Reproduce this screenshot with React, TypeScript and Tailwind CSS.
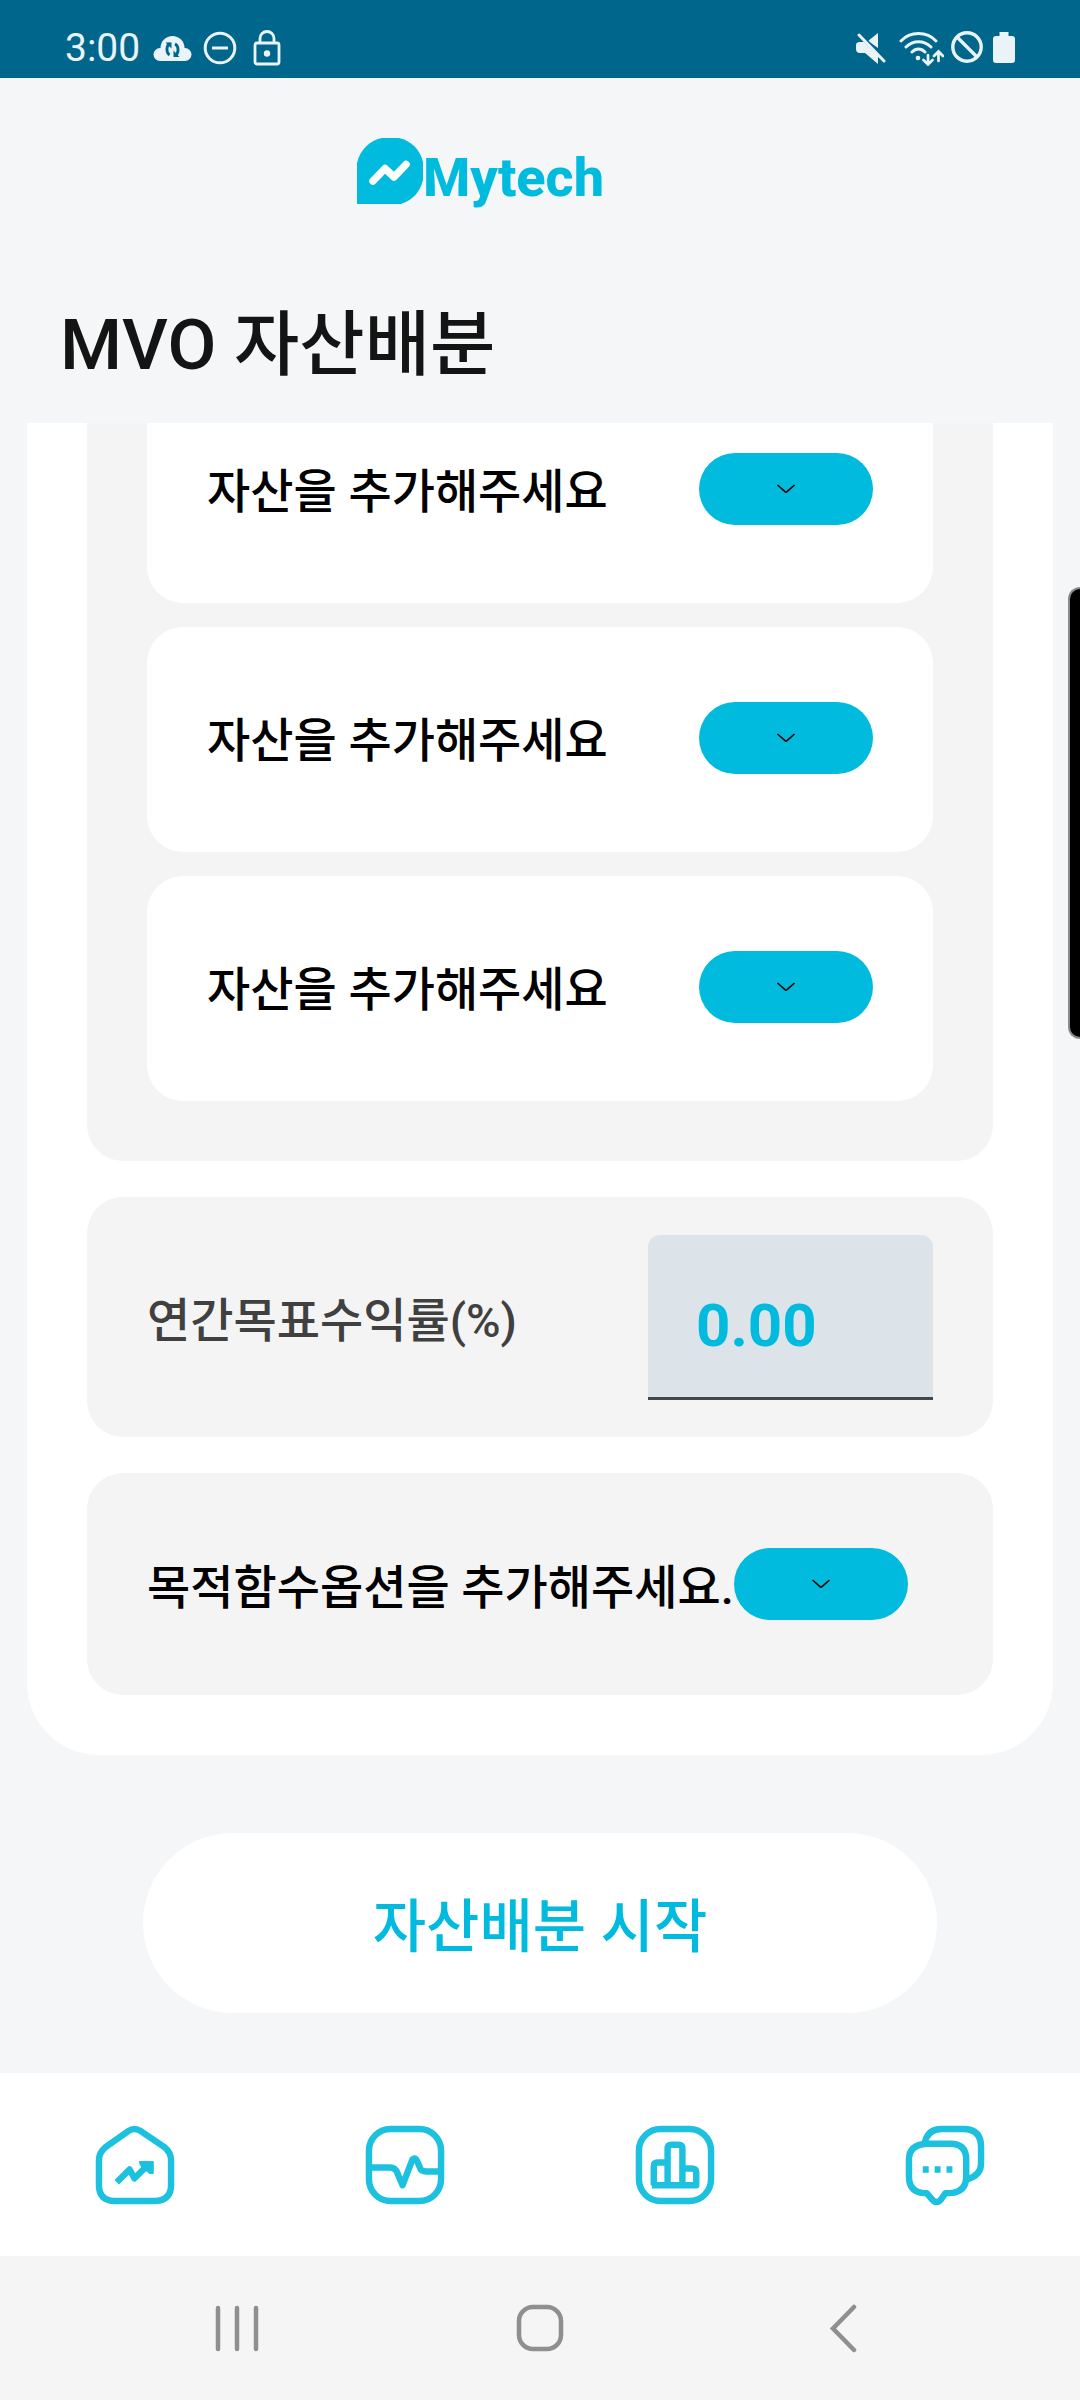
import { useState } from "react";

const FONT = "font-[Roboto,'Noto_Sans_CJK_KR',sans-serif]";

function StatusBar() {
  return (
    <div className="flex h-[78px] shrink-0 items-center justify-between bg-[#00668b] pl-[65px] pr-[65px] pt-[17px] text-[#eaf3f8]">
      <div className="flex items-center">
        <time className="w-[74px] text-[39px] leading-[48px]">3:00</time>
        <svg className="ml-[14px]" width="39" height="40" viewBox="0 0 39 40" aria-hidden="true">
          <circle cx="19.500" cy="20" r="12" fill="currentColor" />
          <rect x="0.500" y="20" width="38" height="13" rx="6.500" fill="currentColor" />
          <path d="M17 15.500c-4 2-4 9-.5 11.500M22 16c4 2 4 9 .5 11.500" fill="none" stroke="#00668b" strokeWidth="2.800" />
          <path d="M12.500 14.500h6v6zM20.500 22.500v6.500h6z" fill="#00668b" />
        </svg>
        <svg className="ml-[11px]" width="34" height="34" viewBox="0 0 34 34" fill="none" stroke="currentColor" strokeWidth="3" aria-hidden="true">
          <circle cx="17" cy="17" r="14.800" />
          <path d="M9 17h16" />
        </svg>
        <svg className="ml-[16px]" width="28" height="36" viewBox="0 0 28 36" fill="none" stroke="currentColor" strokeWidth="2.800" aria-hidden="true">
          <rect x="2" y="13" width="24" height="21" rx="2" />
          <path d="M7 13V8.500a7 7 0 0 1 14 0V13" />
          <circle cx="14" cy="23.500" r="3.200" fill="currentColor" stroke="none" />
        </svg>
      </div>
      <div className="flex items-center">
        <svg width="30" height="34" viewBox="0 0 30 34" aria-hidden="true">
          <path d="M12 10l10-8v15z" fill="currentColor" />
          <path d="M3 4l25 26" stroke="#00668b" strokeWidth="6" />
          <path d="M3 4l25 26" stroke="currentColor" strokeWidth="3" strokeLinecap="round" />
          <path d="M0 14q0-3 4-3h4l14 14v8L9 22H4q-4 0-4-4z" fill="currentColor" />
        </svg>
        <svg className="ml-[13px]" width="45" height="36" viewBox="0 0 45 36" fill="none" stroke="currentColor" strokeWidth="3" strokeLinecap="round" aria-hidden="true">
          <path d="M2 11c9-10 26-10 35 0M7 17c7-7 18-7 25 0M13 22c4-4 9-4 13 0" />
          <circle cx="19" cy="28" r="2.300" fill="currentColor" stroke="none" />
          <path d="M29 25v9m-4.500-4l4.500 4.500 4.500-4.500M39.500 31v-9m-4.500 4l4.500-4.500 4.500 4.500" strokeWidth="2.700" />
        </svg>
        <svg className="ml-[6px]" width="34" height="34" viewBox="0 0 34 34" fill="none" stroke="currentColor" strokeWidth="3.400" aria-hidden="true">
          <circle cx="17" cy="16" r="14.200" />
          <path d="M7 6l20 20" />
        </svg>
        <svg className="ml-[9px]" width="22" height="32" viewBox="0 0 22 32" fill="currentColor" aria-hidden="true">
          <path d="M6.500 0h9v4H19q3 0 3 3v21q0 3-3 3H3q-3 0-3-3V7q0-3 3-3h3.500z" />
        </svg>
      </div>
    </div>
  );
}

function Logo() {
  return (
    <div className="flex h-[76px] items-start pl-[357px] text-[#00bbdd]">
      <svg className="mt-[7px] shrink-0" width="66" height="66" viewBox="0 0 66 66" aria-hidden="true">
        <path d="M0 66V25C3 11 14 2 25 0h17c12 3 21 11 24 24v18c-3 12-10 20-22 24z" fill="currentColor" />
        <path d="M16 43l12-12.500 9 8.500 12-12.500" fill="none" stroke="#fff" strokeWidth="7.500" strokeLinecap="round" strokeLinejoin="round" />
      </svg>
      <span className="text-[54px] leading-[94px] font-extrabold">Mytech</span>
    </div>
  );
}

function DropButton({ label }: { label: string }) {
  return (
    <button type="button" aria-label={label} className="flex h-[72px] w-[174px] shrink-0 items-center justify-center rounded-full bg-[#00bbdd]">
      <svg width="20" height="12" viewBox="0 0 20 12" fill="none" stroke="#000" strokeWidth="1.600" aria-hidden="true">
        <path d="M1.500 2L9 8.700q1 .8 2 0L18.500 2" />
      </svg>
    </button>
  );
}

function AssetItem({ label }: { label: string }) {
  return (
    <li className="flex h-[225px] items-start justify-between rounded-[36px] bg-white px-[60px] pt-[75px]">
      <span className="text-[47px] leading-[78px] font-medium text-black">{label}</span>
      <DropButton label={label} />
    </li>
  );
}

const tabs = [
  {
    name: "홈",
    art: (
      <>
        <path d="M34 6q6-4 12 0l25 17q6 5 6 13v25q0 15-16 16H19Q4 76 4 61V36q0-8 6-13z" />
        <path d="M22 58l13-13 5 9 11-11" />
        <path d="M45 37h14v12h-4l-9-8z" fill="currentColor" strokeWidth="1" />
      </>
    ),
  },
  {
    name: "진단",
    art: (
      <>
        <rect x="4" y="4" width="73" height="73" rx="22" />
        <path d="M4 43h21q6 0 8 6l5 12 10-26q3-3 5 2l3 7q1 3 6 3h15" />
      </>
    ),
  },
  {
    name: "차트",
    art: (
      <>
        <rect x="4" y="4" width="73" height="73" rx="22" />
        <path d="M19 61V42q0-4 4-4h10m0 23V24q0-4 4-4h7q4 0 4 4v37m0-17h9q5 0 5 4v13H17" />
      </>
    ),
  },
  {
    name: "채팅",
    art: (
      <>
        <path d="M20 18Q23 4 37 4h22q18 0 18 18v17q0 12-14 16" />
        <path d="M22 19h24q16 0 16 16v17q0 16-16 17h-5l-5 7q-4 4-8 0l-6-7h-3Q4 68 4 52V35q0-15 18-16z" />
        <path d="M18 45h6m6 0h6m6 0h6" />
      </>
    ),
  },
];

export default function App() {
  const [rate, setRate] = useState("0.00");
  return (
    <div className={`relative flex min-h-screen w-full flex-col bg-[#f4f6f8] ${FONT}`}>
      <StatusBar />
      <header className="pt-[53px]">
        <Logo />
        <h1 className="px-[60px] pt-[88px] pb-[28px] text-[71px] leading-[100px] font-medium text-[#141414]">MVO 자산배분</h1>
      </header>
      <main className="flex flex-1 flex-col">
        <div className="overflow-hidden px-[27px]">
          <div className="-mt-[45px] flex flex-col gap-[36px] rounded-b-[72px] bg-white px-[60px] pb-[60px]">
            <ul className="flex flex-col gap-6 rounded-b-[36px] bg-[#f4f4f4] px-[60px] pb-[60px]">
              <AssetItem label="자산을 추가해주세요" />
              <AssetItem label="자산을 추가해주세요" />
              <AssetItem label="자산을 추가해주세요" />
            </ul>
            <div className="flex h-[240px] items-center justify-between rounded-[36px] bg-[#f4f4f4] px-[60px]">
              <label htmlFor="rate" className="pt-2 text-[47px] leading-[72px] font-medium text-[#404040]">
                연간목표수익률(%)
              </label>
              <input
                id="rate"
                value={rate}
                onChange={(e) => setRate(e.target.value)}
                inputMode="decimal"
                className="h-[165px] w-[285px] rounded-t-[12px] border-b-[3px] border-[#40484c] bg-[#dce3e9] px-[48px] pt-5 text-[60px] font-bold text-[#00bbdd] outline-none"
              />
            </div>
            <div className="flex h-[222px] items-center rounded-[36px] bg-[#f4f4f4] pl-[60px]">
              <span className="pt-2 text-[47px] leading-[72px] font-medium whitespace-nowrap text-black">목적함수옵션을 추가해주세요.</span>
              <DropButton label="목적함수옵션을 추가해주세요." />
            </div>
          </div>
        </div>
        <div className="flex px-[143px] pt-[78px] pb-[60px]">
          <button type="button" className="h-[180px] flex-1 rounded-full bg-white pt-2 text-[58px] leading-[80px] font-medium text-[#00bbdd]">
            자산배분 시작
          </button>
        </div>
      </main>
      <nav className="grid h-[183px] shrink-0 grid-cols-4 bg-white" aria-label="메뉴">
        {tabs.map((t) => (
          <a key={t.name} href="#" aria-label={t.name} className="flex items-center justify-center text-[#1cc1e0]">
            <svg width="80" height="80" viewBox="0 0 81 81" fill="none" stroke="currentColor" strokeWidth="6.500" strokeLinejoin="round">
              {t.art}
            </svg>
          </a>
        ))}
      </nav>
      <div className="grid h-[144px] shrink-0 grid-cols-3 bg-[#f5f5f5] px-[86px] text-[#8f8f8f]">
        <button type="button" aria-label="최근 앱" className="flex items-center justify-center">
          <svg width="48" height="48" viewBox="0 0 48 48" stroke="currentColor" strokeWidth="4.500" strokeLinecap="round">
            <path d="M5 4v41M24 4v41M43 4v41" />
          </svg>
        </button>
        <button type="button" aria-label="홈 화면" className="flex items-center justify-center">
          <svg width="48" height="48" viewBox="0 0 48 48" fill="none" stroke="currentColor" strokeWidth="4.500">
            <rect x="3" y="3" width="42" height="42" rx="14" />
          </svg>
        </button>
        <button type="button" aria-label="뒤로" className="flex items-center justify-center">
          <svg width="28" height="50" viewBox="0 0 28 50" fill="none" stroke="currentColor" strokeWidth="4.500" strokeLinecap="round">
            <path d="M25 4L4 25.500 25 47" />
          </svg>
        </button>
      </div>
      <div className="absolute top-[587px] right-0 h-[452px] w-[12px] rounded-l-[12px] border-y-2 border-l-2 border-[#8a8b8c] bg-black" />
    </div>
  );
}
